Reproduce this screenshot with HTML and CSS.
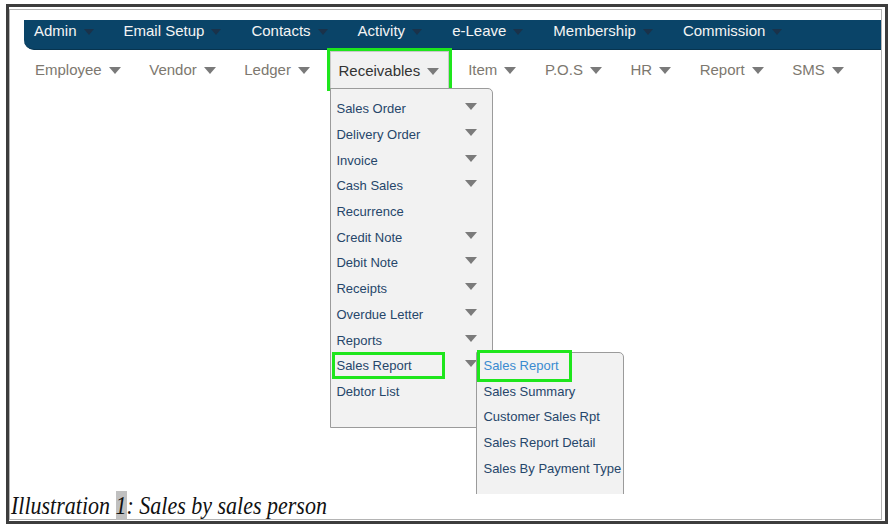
FILE: index.html
```html
<!DOCTYPE html>
<html lang="en">
<head>
    <meta charset="UTF-8">
    <title>Sales by sales person</title>
    <link rel="stylesheet" href="styles.css">
</head>
<body>

<div class="frame">
    <div class="page">
        <div class="shot">
            <!-- Top Navigation Bar -->
            <ul class="topbar">
                <li>Admin <span class="arr"></span></li>
                <li>Email Setup <span class="arr"></span></li>
                <li>Contacts <span class="arr"></span></li>
                <li>Activity <span class="arr"></span></li>
                <li>e-Leave <span class="arr"></span></li>
                <li>Membership <span class="arr"></span></li>
                <li>Commission <span class="arr"></span></li>
            </ul>

            <!-- Second Navigation Bar -->
            <ul class="subbar">
                <li>Employee <span class="arr"></span></li>
                <li>Vendor <span class="arr"></span></li>
                <li>Ledger <span class="arr"></span></li>
                <li class="active">Receivables <span class="arr"></span>
                    <ul class="dropdown">
                        <li>Sales Order <span class="darr"></span></li>
                        <li>Delivery Order <span class="darr"></span></li>
                        <li>Invoice <span class="darr"></span></li>
                        <li>Cash Sales <span class="darr"></span></li>
                        <li>Recurrence</li>
                        <li>Credit Note <span class="darr"></span></li>
                        <li>Debit Note <span class="darr"></span></li>
                        <li>Receipts <span class="darr"></span></li>
                        <li>Overdue Letter <span class="darr"></span></li>
                        <li>Reports <span class="darr"></span></li>
                        <li class="open"><span class="mark">Sales Report</span> <span class="darr"></span>
                            <ul class="submenu">
                                <li class="current"><span class="mark2">Sales Report</span></li>
                                <li>Sales Summary</li>
                                <li>Customer Sales Rpt</li>
                                <li>Sales Report Detail</li>
                                <li>Sales By Payment Type</li>
                            </ul>
                        </li>
                        <li>Debtor List</li>
                    </ul>
                </li>
                <li>Item <span class="arr"></span></li>
                <li>P.O.S <span class="arr"></span></li>
                <li>HR <span class="arr"></span></li>
                <li>Report <span class="arr"></span></li>
                <li>SMS <span class="arr"></span></li>
            </ul>
        </div>
        <div class="caption">Illustration <span class="num">1</span>: Sales by sales person</div>
    </div>
</div>

</body>
</html>
```

FILE: styles.css
```css
body {
    margin: 0;
    font-family: "Liberation Sans", Arial, sans-serif;
    background: #fff;
}
ul {
    list-style: none;
    margin: 0;
    padding: 0;
}
.frame {
    box-sizing: border-box;
    width: 882px;
    height: 520px;
    margin: 4px 0 0 6px;
    border: 3px solid #3d3d3d;
    padding: 2px 3px 1px 0;
}
.page {
    height: 100%;
    border: 1px solid #b4b4b4;
    box-sizing: border-box;
    display: flex;
    flex-direction: column;
}
.shot {
    height: 484px;
    flex: none;
    overflow: hidden;
    padding: 10px 0 0 14px;
    box-sizing: border-box;
}

/* top bar */
.topbar {
    display: flex;
    align-items: center;
    height: 30px;
    box-sizing: border-box;
    padding: 0 0 8px 10px;
    background-color: #0a4468;
    border-bottom: 1px solid #07344f;
    border-bottom-left-radius: 10px;
    color: #f4f4f4;
    font-size: 15px;
}
.topbar li {
    display: flex;
    align-items: center;
    margin-right: 30px;
    white-space: nowrap;
}
.arr {
    display: inline-block;
    width: 0;
    height: 0;
    margin-left: 7px;
    border-left: 5.5px solid transparent;
    border-right: 5.5px solid transparent;
    border-top: 6px solid #1a324a;
    margin-top: 2px;
}

/* second bar */
.subbar {
    display: flex;
    height: 37px;
    padding: 1px 0 0 11px;
    font-size: 15px;
    color: #7d786f;
}
.subbar > li {
    display: flex;
    align-items: center;
    margin-right: 28.5px;
    white-space: nowrap;
}
.subbar > li > .arr {
    border-left-width: 6px;
    border-right-width: 6px;
    border-top: 7px solid #7a7a7a;
}
.subbar > li.active {
    position: relative;
    margin-left: -8px;
    margin-right: 19px;
    padding: 0 9px 0 7px;
    color: #333;
    background-color: #f1f1f1;
    border: 1px solid #c9c9c9;
    border-bottom: none;
    outline: 3px solid #1ee61c;
}

/* dropdown */
.dropdown {
    position: absolute;
    top: 100%;
    left: -1px;
    width: 163px;
    height: 340px;
    box-sizing: border-box;
    padding-top: 7px;
    background-color: #f2f2f2;
    border: 1px solid #9b9b9b;
    border-radius: 0 5px 5px 0;
    font-size: 13px;
    color: #26466a;
    z-index: 2;
}
.dropdown > li {
    position: relative;
    display: flex;
    align-items: center;
    justify-content: space-between;
    height: 25.7px;
    padding: 0 15px 0 5px;
}
.darr {
    width: 0;
    height: 0;
    margin-top: -4px;
    border-left: 6.5px solid transparent;
    border-right: 6.5px solid transparent;
    border-top: 7px solid #7b7b7b;
}
.mark {
    display: inline-block;
    width: 106px;
    height: 21px;
    line-height: 21px;
    margin-left: -1px;
    padding-left: 1px;
    outline: 3px solid #1ee61c;
}

/* submenu */
.submenu {
    position: absolute;
    left: 145px;
    top: -1px;
    width: 148px;
    height: 170px;
    box-sizing: border-box;
    background-color: #f2f2f2;
    border: 1px solid #9b9b9b;
    border-radius: 0 5px 0 0;
    z-index: 3;
}
.submenu li {
    height: 25.6px;
    line-height: 25.6px;
    padding-left: 6px;
    white-space: nowrap;
}
.submenu li.current {
    height: 26px;
    line-height: 26px;
    color: #3a8bd0;
}
.mark2 {
    display: inline-block;
    width: 86px;
    margin-left: -3px;
    padding-left: 3px;
    outline: 3px solid #1ee61c;
}

/* caption */
.caption {
    padding-left: 1px;
    font-family: "Liberation Serif", "Times New Roman", serif;
    font-style: italic;
    font-size: 22px;
    line-height: 25px;
    color: #111;
    transform: scaleY(1.15);
    transform-origin: 0 80%;
}
.num {
    background-color: #c0c0c0;
}
```
